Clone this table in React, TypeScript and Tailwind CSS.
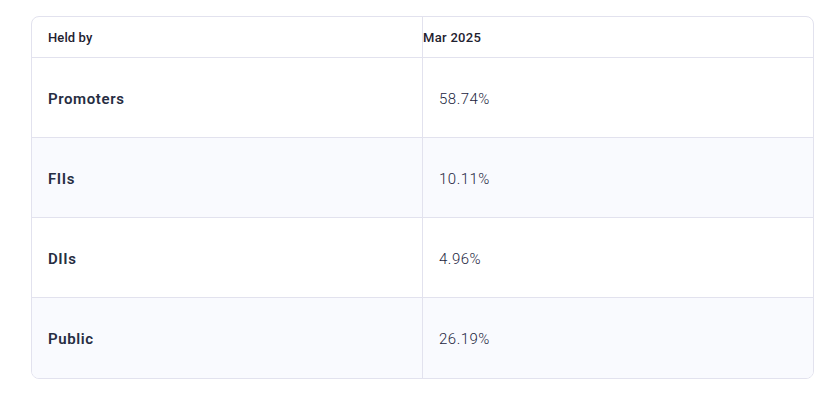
import React from "react";

const rows = [
  { label: "Promoters", value: "58.74%" },
  { label: "FIIs", value: "10.11%" },
  { label: "DIIs", value: "4.96%" },
  { label: "Public", value: "26.19%" },
];

const App = () => {
  return (
    <div
      className="w-[834px] h-[400px] bg-white pl-[31px] pt-[16px]"
      style={{ fontFamily: "Roboto, 'Noto Sans', sans-serif" }}
    >
      <div className="w-[783px] rounded-[8px] border border-[#e2e2ee] overflow-hidden">
        <div className="grid grid-cols-[391px_1fr] h-[41px] border-b border-[#e2e2ee]">
          <div className="flex items-center pl-[16px] pt-[1px] border-r border-[#e2e2ee] text-[13px] font-medium text-[#1f2230] tracking-[0.1px]">
            Held by
          </div>
          <div className="flex items-center pt-[1px] text-[13px] font-medium text-[#1f2230] tracking-[0.3px]">
            Mar 2025
          </div>
        </div>
        {rows.map((row, idx) => (
          <div
            key={idx}
            className={`grid grid-cols-[391px_1fr] h-[80px] ${
              idx < rows.length - 1 ? "border-b border-[#e2e2ee]" : ""
            } ${idx % 2 === 1 ? "bg-[#f9fafe]" : "bg-white"}`}
          >
            <div className="flex items-center pl-[16px] pt-[3px] border-r border-[#e2e2ee] text-[15px] font-semibold text-[#262d42] tracking-[0.6px]">
              {row.label}
            </div>
            <div className="flex items-center pl-[16px] pt-[3px] text-[15px] font-light text-[#1c2540] tracking-[0.5px]">
              {row.value}
            </div>
          </div>
        ))}
      </div>
    </div>
  );
};

export default App;
